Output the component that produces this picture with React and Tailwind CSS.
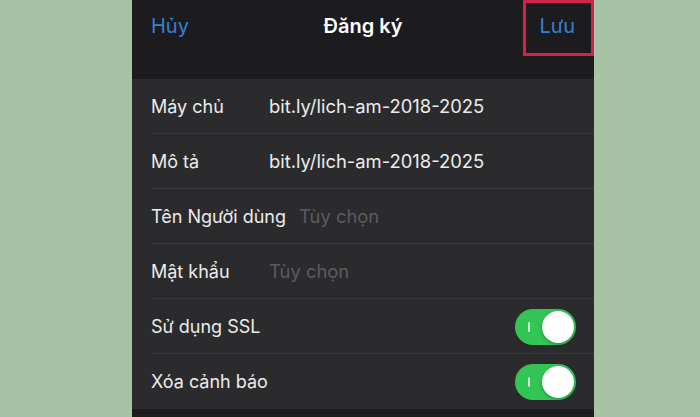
import React from "react";

const font = { fontFamily: "Inter, 'Noto Sans', sans-serif" };

function Toggle() {
  return (
    <div className="relative w-[61px] h-[36px] rounded-full bg-[#32c454] flex items-center">
      <div className="absolute left-[13px] top-[13px] w-[2px] h-[10px] bg-[#c8f0cf] rounded" />
      <div className="absolute right-[2px] top-[2px] w-[32px] h-[32px] rounded-full bg-white shadow-[0_1px_3px_rgba(0,0,0,0.3)]" />
    </div>
  );
}

function Row({ label, value, placeholder, valueLeft, toggle, last }) {
  return (
    <div className="relative h-[55px] flex items-center pl-[19px] pr-[18px]">
      <span className="text-[18px] text-[#ececec] shrink-0">{label}</span>
      {value !== undefined && (
        <span
          className={
            "absolute top-1/2 -translate-y-1/2 text-[18.4px] " +
            (placeholder ? "text-[#5b5b60]" : "text-[#ececec]")
          }
          style={{ left: valueLeft }}
        >
          {value}
        </span>
      )}
      {toggle && (
        <div className="ml-auto">
          <Toggle />
        </div>
      )}
      {!last && <div className="absolute bottom-0 left-[19px] right-0 h-px bg-[#3a3a3d]" />}
    </div>
  );
}

export default function App() {
  return (
    <div className="w-[700px] h-[417px] bg-[#a7c2a4] flex overflow-hidden" style={font}>
      <div className="ml-[132px] w-[462px] h-full flex flex-col relative">
        <div className="h-[79px] bg-[#1c1c1e] shrink-0">
          <div className="h-[52px] flex items-center px-[19px] relative">
            <span className="text-[20px] text-[#3580d2]">Hủy</span>
            <span className="absolute left-1/2 -translate-x-1/2 text-[20px] font-semibold text-white">Đăng ký</span>
            <span className="ml-auto text-[20px] text-[#3580d2]">Lưu</span>
          </div>
        </div>
        <div className="bg-[#2b2b2d] flex flex-col">
          <Row label="Máy chủ" value="bit.ly/lich-am-2018-2025" valueLeft={137} />
          <Row label="Mô tả" value="bit.ly/lich-am-2018-2025" valueLeft={137} />
          <Row label="Tên Người dùng" value="Tùy chọn" placeholder valueLeft={167} />
          <Row label="Mật khẩu" value="Tùy chọn" placeholder valueLeft={137} />
          <Row label="Sử dụng SSL" toggle />
          <Row label="Xóa cảnh báo" toggle last />
        </div>
        <div className="flex-1 bg-[#1c1c1e]" />
        <div className="absolute left-[391px] top-0 w-[71px] h-[56px] border-[3px] border-[#d2234a]" />
      </div>
    </div>
  );
}
